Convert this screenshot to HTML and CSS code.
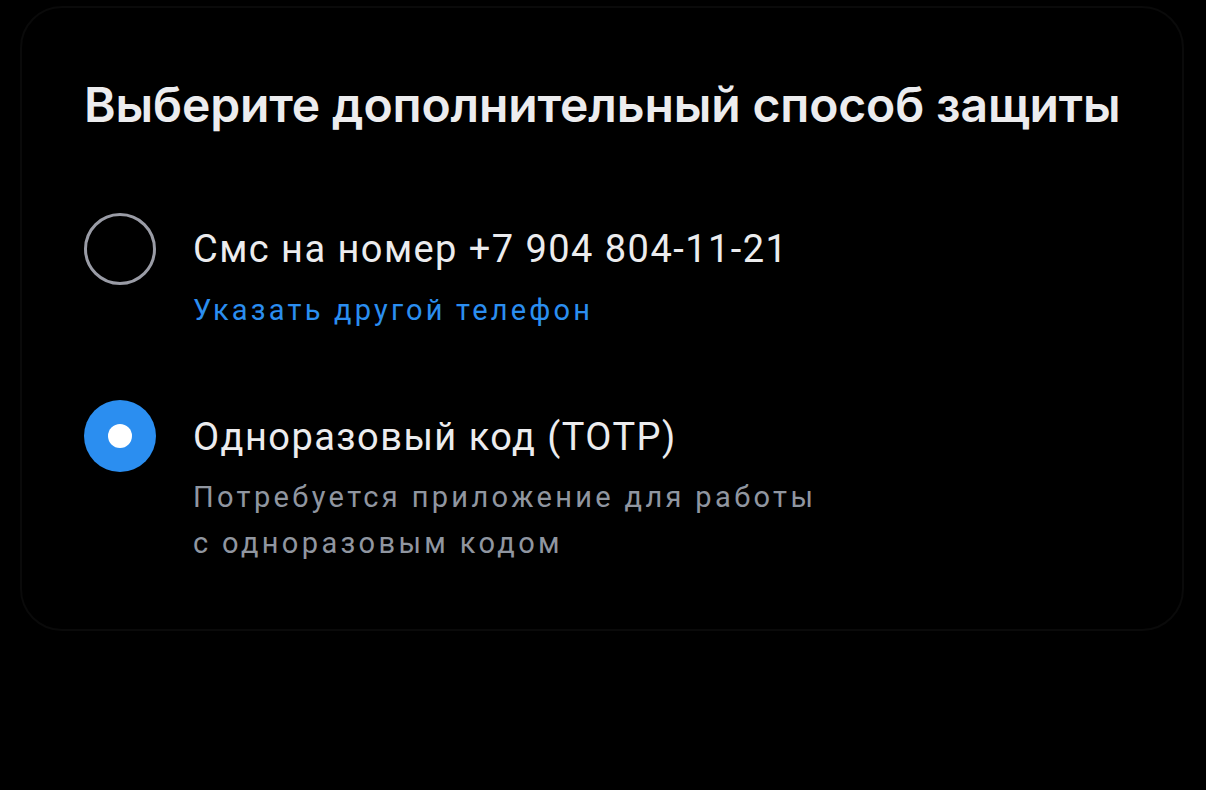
FILE: index.html
```html
<!DOCTYPE html>
<html lang="ru">
<head>
<meta charset="utf-8">
<title>Дополнительный способ защиты</title>
<link rel="stylesheet" href="styles.css">
</head>
<body>
<div class="card">
  <h1 class="title">Выберите дополнительный способ защиты</h1>
  <div class="options">
    <div class="option">
      <span class="radio"></span>
      <div class="option-text">
        <div class="label">Смс на номер +7 904 804-11-21</div>
        <a class="link" href="#">Указать другой телефон</a>
      </div>
    </div>
    <div class="option option-second">
      <span class="radio radio-checked"><span class="dot"></span></span>
      <div class="option-text">
        <div class="label label-second">Одноразовый код (TOTP)</div>
        <div class="hint">Потребуется приложение для работы<br>с одноразовым кодом</div>
      </div>
    </div>
  </div>
</div>
</body>
</html>
```

FILE: styles.css
```css
html, body {
  margin: 0;
  padding: 0;
  background: #000;
}

body {
  width: 1206px;
  height: 790px;
  overflow: hidden;
  font-family: Roboto, "Noto Sans", sans-serif;
}

.card {
  margin: 6px 22px 0 20px;
  border: 2px solid #0a0a0a;
  border-radius: 42px;
  padding: 68px 62px 63px 62px;
}

.title {
  margin: 0;
  font-family: Inter, "Noto Sans", sans-serif;
  font-weight: 600;
  font-size: 48px;
  line-height: 58px;
  color: #ececee;
  letter-spacing: -0.12px;
  white-space: nowrap;
}

.options {
  margin-top: 79px;
  display: flex;
  flex-direction: column;
  gap: 67px;
}

.option {
  display: flex;
  align-items: flex-start;
  gap: 37px;
}

.radio {
  flex: none;
  box-sizing: border-box;
  width: 72px;
  height: 72px;
  border-radius: 50%;
  border: 3px solid #9a9ca6;
  display: flex;
  align-items: center;
  justify-content: center;
}

.radio-checked {
  border: none;
  background: #2b8ef0;
}

.dot {
  width: 24px;
  height: 24px;
  border-radius: 50%;
  background: #fff;
}

.option-text {
  display: flex;
  flex-direction: column;
}

.label {
  font-size: 38px;
  line-height: 72px;
  color: #ececee;
  letter-spacing: 1.45px;
  white-space: nowrap;
}

.label-second {
  padding-top: 1px;
}

.link {
  margin-top: 2px;
  font-size: 29px;
  line-height: 46px;
  color: #2b8ef0;
  text-decoration: none;
  letter-spacing: 3.2px;
  white-space: nowrap;
}

.hint {
  margin-top: 1px;
  font-size: 29px;
  line-height: 46px;
  color: #9096a0;
  letter-spacing: 3.35px;
  white-space: nowrap;
}
```
